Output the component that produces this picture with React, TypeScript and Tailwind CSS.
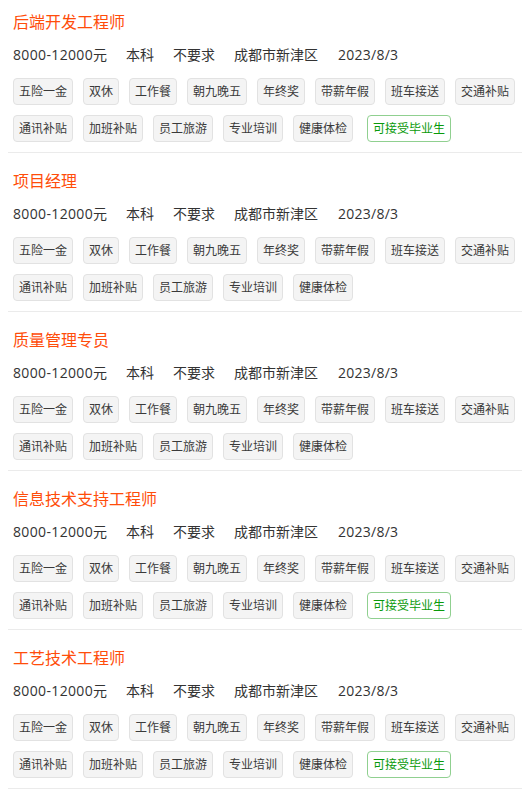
const BENEFITS = ["五险一金", "双休", "工作餐", "朝九晚五", "年终奖", "带薪年假", "班车接送", "交通补贴", "通讯补贴", "加班补贴", "员工旅游", "专业培训", "健康体检"];

const JOBS = [
  { title: "后端开发工程师", grad: true },
  { title: "项目经理", grad: false },
  { title: "质量管理专员", grad: false },
  { title: "信息技术支持工程师", grad: true },
  { title: "工艺技术工程师", grad: true },
];

const FONT = "font-['Open_Sans','Noto_Sans_CJK_SC',sans-serif]";

function JobItem({ title, grad }: { title: string; grad: boolean }) {
  return (
    <div className="pl-[5px] pt-[13px] first:pt-[7px] pb-[10px] border-b border-[#ebebeb]">
      {/* Title */}
      <div className="h-[30px] leading-[30px] text-[16px] text-[#ff4d0a]">{title}</div>

      {/* Meta */}
      <div className="mt-[6px] h-[24px] leading-[24px] text-[14px] text-[#333] flex gap-x-[19px]">
        <span><span className="tracking-[0.35px]">8000-12000</span>元</span>
        <span>本科</span>
        <span>不要求</span>
        <span>成都市新津区</span>
        <span className="ml-px tracking-[0.25px]">2023/8/3</span>
      </div>

      {/* Benefits */}
      <div className="mt-[11px] flex flex-wrap gap-x-[10px] gap-y-[10px]">
        {BENEFITS.map(b => (
          <span
            key={b}
            className="h-[27px] px-[5px] flex items-center text-[12px] text-[#3a3a3a] bg-[#f4f4f4] border border-[#e2e2e2] rounded-[4px]"
          >
            {b}
          </span>
        ))}
        {grad && (
          <span className="ml-[4px] h-[27px] px-[5px] flex items-center text-[12px] text-[#0a9a0a] bg-white border border-[#90d090] rounded-[4px]">
            可接受毕业生
          </span>
        )}
      </div>
    </div>
  );
}

export default function App() {
  return (
    <div className={`bg-white min-h-[793px] overflow-hidden ${FONT}`}>
      <div className="ml-2">
        {JOBS.map(j => (
          <JobItem key={j.title} title={j.title} grad={j.grad} />
        ))}
      </div>
    </div>
  );
}
